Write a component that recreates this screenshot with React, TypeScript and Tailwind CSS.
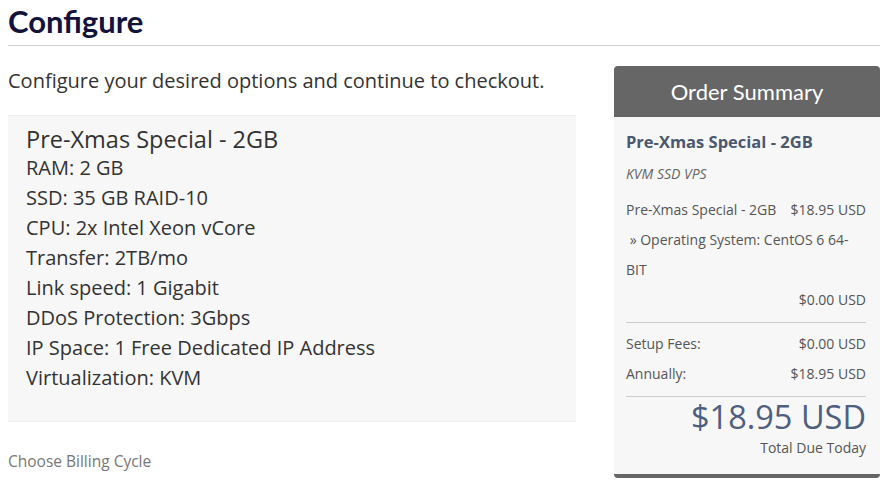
const sans = "font-['Open_Sans',sans-serif]";

export default function App() {
  return (
    <div className={`${sans} w-[880px] h-[480px] overflow-hidden bg-white text-[#333]`}>
      <div className="pl-2">
        <h1 className="font-['Lato',sans-serif] font-bold text-[31px] leading-none text-[#12123a] pt-[6px] h-[46px] border-b border-[#ccc]">
          Configure
        </h1>
      </div>
      <div className="flex pl-2 gap-[38px]">
        <div className="w-[568px]">
          <p className="text-[20px] leading-6 mt-[23px] text-[#333]">
            Configure your desired options and continue to checkout.
          </p>
          <div className="mt-[22px] bg-[#f7f7f7] border-t border-b border-[#eee] h-[307px] px-[18px] pt-[9px] text-[#333]">
            <div className="text-[23.5px] leading-[28px]">Pre-Xmas Special - 2GB</div>
            <ul className="text-[20px] leading-[30px]">
              <li>RAM: 2 GB</li>
              <li>SSD: 35 GB RAID-10</li>
              <li>CPU: 2x Intel Xeon vCore</li>
              <li>Transfer: 2TB/mo</li>
              <li>Link speed: 1 Gigabit</li>
              <li>DDoS Protection: 3Gbps</li>
              <li>IP Space: 1 Free Dedicated IP Address</li>
              <li>Virtualization: KVM</li>
            </ul>
          </div>
          <div className="mt-[29px] text-[15.5px] leading-5 text-[#777]">Choose Billing Cycle</div>
        </div>
        <div className="w-[266px] mt-[20px] shrink-0">
          <div className="h-[51px] bg-[#666] rounded-t-[4px] flex items-center justify-center font-['Lato',sans-serif] text-white text-[22px]">
            Order Summary
          </div>
          <div className="bg-[#f7f7f7] border-b-4 border-[#666] rounded-b-[4px] pl-3 pr-[14px] pt-[15px] h-[361px]">
            <div className="text-[16.5px] font-bold text-[#4a5870] leading-5">Pre-Xmas Special - 2GB</div>
            <div className="text-[14px] italic text-[#666] mt-[12px] leading-5">KVM SSD VPS</div>
            <div className="text-[14px] leading-[30px] text-[#555] mt-[11px]">
              <div className="flex justify-between">
                <span>Pre-Xmas Special - 2GB</span>
                <span>$18.95 USD</span>
              </div>
              <div>&nbsp;» Operating System: CentOS 6 64-BIT</div>
              <div className="text-right">$0.00 USD</div>
            </div>
            <div className="border-t border-[#ccc] mt-[7px] pt-[6px] text-[14px] leading-[30px] text-[#555]">
              <div className="flex justify-between">
                <span>Setup Fees:</span>
                <span>$0.00 USD</span>
              </div>
              <div className="flex justify-between">
                <span>Annually:</span>
                <span>$18.95 USD</span>
              </div>
            </div>
            <div className="border-t border-[#ccc] mt-[7px] text-right">
              <div className="text-[32.5px] leading-[40px] text-[#4e5f7f]">$18.95 USD</div>
              <div className="text-[14px] leading-5 text-[#555] mt-[1px]">Total Due Today</div>
            </div>
          </div>
        </div>
      </div>
    </div>
  );
}
